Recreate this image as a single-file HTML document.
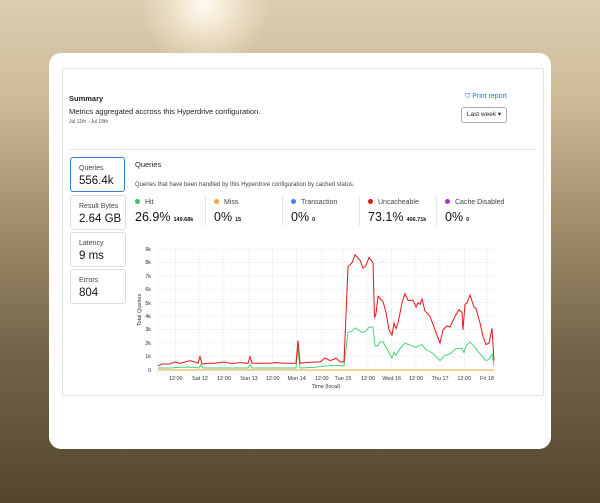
<!DOCTYPE html><html><head><style>
body{margin:0;width:600px;height:503px;overflow:hidden;font-family:"Liberation Sans",sans-serif;background:linear-gradient(180deg,#dccdb2 0%,#cdb995 20%,#a08c69 45%,#74634a 70%,#54462f 100%);position:relative}
.sun{position:absolute;left:140px;top:-60px;width:130px;height:130px;border-radius:50%;background:radial-gradient(circle,#fffaf0 0%,rgba(255,245,225,.6) 30%,rgba(255,240,210,0) 70%)}
.card{position:absolute;left:49px;top:53px;width:502px;height:396px;background:#fff;border-radius:12px}
.panel{position:absolute;left:13px;top:15px;width:480px;height:326px;border:1px solid #e3e3e3;border-radius:2px}
.t{position:absolute;white-space:nowrap;color:#222}
.tab{position:absolute;left:7px;width:54px;height:33px;border:1px solid #ddd;border-radius:3px;background:#fff}
.tab .l{position:absolute;left:8px;top:7px;font-size:7px;color:#444;white-space:nowrap}
.tab .v{position:absolute;left:8px;top:17px;font-size:11.5px;color:#111;white-space:nowrap}
.m{position:absolute;top:127px;height:30px;border-left:1px solid #e6e6e6}
.m .l{position:absolute;left:8px;top:3px;font-size:7px;color:#444;white-space:nowrap}
.m .l i{display:inline-block;width:5px;height:5px;border-radius:50%;margin-right:5px;vertical-align:0}
.m .v{position:absolute;left:8px;top:14px;font-size:12.5px;color:#111;white-space:nowrap}
.m .v small{font-size:5.5px;font-weight:bold;margin-left:3px}
</style></head><body>
<div class="sun"></div>
<div class="card"><div class="panel">
<div class="t" style="left:6px;top:25px;font-size:7.5px;font-weight:bold">Summary</div>
<div class="t" style="left:6px;top:38px;font-size:7.5px">Metrics aggregated accross this Hyperdrive configuration.</div>
<div class="t" style="left:6px;top:50px;font-size:5px;color:#555">Jul 11th - Jul 18th</div>
<div class="t" style="left:402px;top:24px;font-size:7px;color:#2f6fd6">&#x26C9;&nbsp;Print report</div>
<div style="position:absolute;left:398px;top:38px;width:44px;height:14px;border:1px solid #aaa;border-radius:3px;font-size:6.5px;line-height:14px;text-align:center;color:#222">Last week ▾</div>
<div style="position:absolute;left:6px;top:80px;width:467px;border-top:1px solid #e6e6e6"></div>
<div class="tab" style="top:88px;border:1.5px solid #2f7de1;width:53px"><div class="l">Queries</div><div class="v">556.4k</div></div>
<div class="tab" style="top:126px"><div class="l">Result Bytes</div><div class="v">2.64 GB</div></div>
<div class="tab" style="top:163px"><div class="l">Latency</div><div class="v">9 ms</div></div>
<div class="tab" style="top:200px"><div class="l">Errors</div><div class="v">804</div></div>
<div class="t" style="left:72px;top:91px;font-size:7.5px">Queries</div>
<div class="t" style="left:72px;top:113px;font-size:6px;color:#444">Queries that have been handled by this Hyperdrive configuration by cached status.</div>
<div class="m" style="left:64px;border:0"><div class="l"><i style="background:#3cc46a"></i>Hit</div><div class="v">26.9%<small>149.68k</small></div></div>
<div class="m" style="left:142px"><div class="l"><i style="background:#f3a43a"></i>Miss</div><div class="v">0%<small>15</small></div></div>
<div class="m" style="left:219px"><div class="l"><i style="background:#3b82f6"></i>Transaction</div><div class="v">0%<small>0</small></div></div>
<div class="m" style="left:296px"><div class="l"><i style="background:#e4151b"></i>Uncacheable</div><div class="v">73.1%<small>406.71k</small></div></div>
<div class="m" style="left:373px"><div class="l"><i style="background:#b52fd0"></i>Cache Disabled</div><div class="v">0%<small>0</small></div></div>
</div></div>
<svg style="position:absolute;left:0;top:0" width="600" height="503" font-family="Liberation Sans" font-size="5.5" fill="#333">
<g stroke="#ececec" stroke-width="0.6">
<line x1="158" x2="494" y1="249" y2="249"/><line x1="158" x2="494" y1="262.4" y2="262.4"/><line x1="158" x2="494" y1="275.8" y2="275.8"/><line x1="158" x2="494" y1="289.2" y2="289.2"/><line x1="158" x2="494" y1="302.6" y2="302.6"/><line x1="158" x2="494" y1="316" y2="316"/><line x1="158" x2="494" y1="329.4" y2="329.4"/><line x1="158" x2="494" y1="342.8" y2="342.8"/><line x1="158" x2="494" y1="356.2" y2="356.2"/>
<line y1="249" y2="371" x1="175.7" x2="175.7"/><line y1="249" y2="371" x1="200" x2="200"/><line y1="249" y2="371" x1="224" x2="224"/><line y1="249" y2="371" x1="249" x2="249"/><line y1="249" y2="371" x1="272.7" x2="272.7"/><line y1="249" y2="371" x1="296.7" x2="296.7"/><line y1="249" y2="371" x1="321.7" x2="321.7"/><line y1="249" y2="371" x1="343" x2="343"/><line y1="249" y2="371" x1="368" x2="368"/><line y1="249" y2="371" x1="391.7" x2="391.7"/><line y1="249" y2="371" x1="416" x2="416"/><line y1="249" y2="371" x1="440" x2="440"/><line y1="249" y2="371" x1="464.3" x2="464.3"/><line y1="249" y2="371" x1="487" x2="487"/>
<line y1="249" y2="371" x1="158" x2="158"/>
</g>
<g text-anchor="end"><text x="151" y="251">9k</text><text x="151" y="264">8k</text><text x="151" y="278">7k</text><text x="151" y="291">6k</text><text x="151" y="305">5k</text><text x="151" y="318">4k</text><text x="151" y="331">3k</text><text x="151" y="345">2k</text><text x="151" y="358">1k</text><text x="151" y="372">0</text></g>
<g text-anchor="middle"><text x="175.7" y="380">12:00</text><text x="200" y="380">Sat 12</text><text x="224" y="380">12:00</text><text x="249" y="380">Sun 13</text><text x="272.7" y="380">12:00</text><text x="296.7" y="380">Mon 14</text><text x="321.7" y="380">12:00</text><text x="343" y="380">Tue 15</text><text x="368" y="380">12:00</text><text x="391.7" y="380">Wed 16</text><text x="416" y="380">12:00</text><text x="440" y="380">Thu 17</text><text x="464.3" y="380">12:00</text><text x="487" y="380">Fri 18</text>
<text x="326" y="388">Time (local)</text>
<text transform="translate(141,310) rotate(-90)">Total Queries</text></g>
<g transform="translate(0,370) scale(1,-13.4)" fill="none">
<line x1="158" x2="494" y1="0" y2="0" stroke="#f6b15a" stroke-width="1.3" vector-effect="non-scaling-stroke"/>
<polyline stroke="#3fce72" stroke-width="0.9" vector-effect="non-scaling-stroke" points="158,0.15 170,0.15 180,0.2 190,0.22 199,0.15 201,0.4 203,0.15 248,0.15 250,0.4 252,0.15 296,0.15 298,1.6 300,0.15 315,0.2 325,0.3 335,0.35 344,0.3 348,2.8 352,2.9 355,3.15 358,3.0 362,2.8 366,2.9 369,3.2 373,3.2 375,1.8 378,1.8 380,2.1 383,2.1 386,1.7 392,0.9 394,1.3 396,1.1 400,1.6 405,2.0 412,1.8 416,1.7 419,1.8 422,1.9 426,1.5 432,1.3 440,0.7 445,1.1 450,1.2 456,1.6 462,1.6 464,1.3 466,1.8 470,2.1 476,1.6 480,1.2 486,0.7 489,0.8 492,1.2 494,0.3"/>
<polyline stroke="#e3141a" stroke-width="1" vector-effect="non-scaling-stroke" points="158,0.3 162,0.45 170,0.45 175,0.6 180,0.5 185,0.6 190,0.7 195,0.6 198,0.5 200,1.0 202,0.45 208,0.5 215,0.5 220,0.55 225,0.6 230,0.5 235,0.5 240,0.55 248,0.5 250,1.0 252,0.5 260,0.5 270,0.5 275,0.55 285,0.5 290,0.5 296,0.5 298,2.2 300,0.5 305,0.55 315,0.6 320,0.6 325,0.9 330,0.7 334,0.8 336,0.9 340,0.6 344,0.6 348,7.7 352,8.0 355,8.6 360,8.2 363,7.6 366,7.8 369,8.4 373,8.0 374.5,3.9 376,4.2 378,5.5 383,5.1 386,4.3 389,3.0 392,2.6 394,3.5 396,3.1 398,3.5 402,5.0 405,5.7 408,5.2 413,5.2 416,4.7 418,5.0 420,4.9 422,5.3 425,4.4 430,4.0 435,3.0 440,2.0 443,3.0 447,3.3 450,3.2 455,4.0 459,4.5 462,4.3 463,3.0 465,4.9 467,5.0 470,5.6 474,4.7 476,4.6 480,3.5 483,2.5 486,1.9 489,2.0 492,3.1 494,0.7"/>
</g>
</svg>
</body></html>
